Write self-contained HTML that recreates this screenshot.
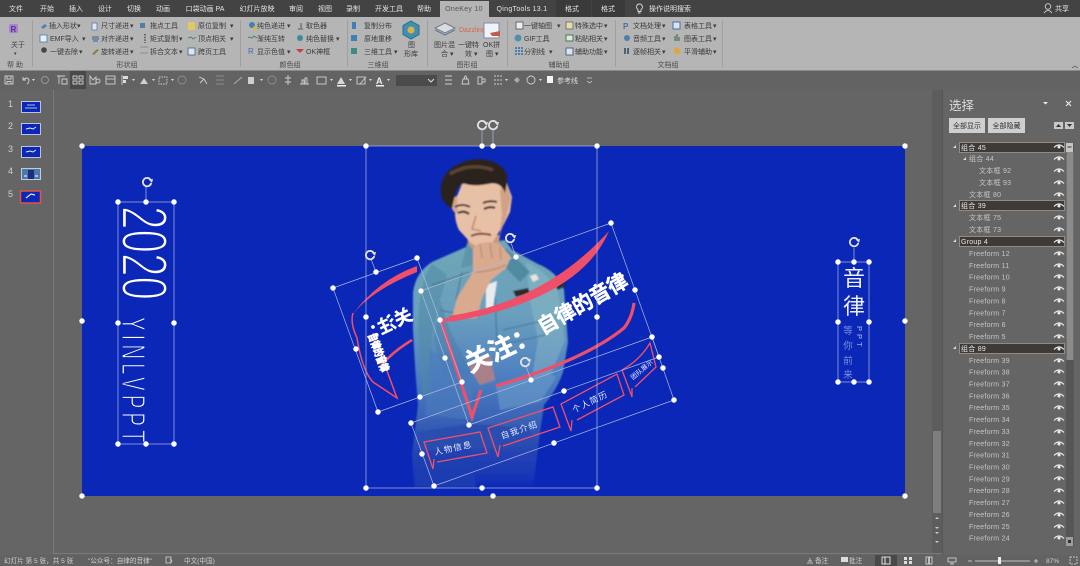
<!DOCTYPE html>
<html lang="zh"><head><meta charset="utf-8"><title>PowerPoint</title>
<style>
html,body{margin:0;padding:0;background:#656565;width:1080px;height:566px;overflow:hidden}
svg{display:block;font-family:"Liberation Sans","Noto Sans CJK SC",sans-serif}
.tab{font-size:7px;fill:#e4e4e4;text-anchor:middle}
.rb text{font-size:7px;fill:#3a3a3a}
.grp{font-size:7px;fill:#4a4a4a;text-anchor:middle}
.rows text{font-size:7px;fill:#c6c6c6;letter-spacing:.25px}
.st{font-size:6.6px;fill:#d0d0d0}
.sel{fill:none;stroke:#aeb8e2;stroke-width:.7}
.r{fill:none;stroke:#f0506a;stroke-linejoin:miter}
.tag{font-size:8.5px;fill:#e8ecff;letter-spacing:1.2px}
.tb{fill:none;stroke:#cfcfcf;stroke-width:.9}
</style></head><body>
<svg width="1080" height="566" viewBox="0 0 1080 566" xmlns="http://www.w3.org/2000/svg">
<defs>
<linearGradient id="den" x1="0" y1="0" x2="0" y2="1">
<stop offset="0" stop-color="#6fa6b6"/><stop offset=".3" stop-color="#6a9fbd"/><stop offset=".55" stop-color="#4d7fc0"/><stop offset=".72" stop-color="#3a63b6"/><stop offset=".85" stop-color="#2444b2"/><stop offset=".94" stop-color="#1a38b5"/><stop offset="1" stop-color="#0b27b7"/>
</linearGradient>
<g id="h"><circle r="2.600" fill="#fff" stroke="#cfd4e6" stroke-width=".5"/></g>
<g id="rot"><path d="M3.6,-2.2A4.2,4.2 0 1 0 4.2,1" fill="none" stroke="#e2e2e2" stroke-width="1.8"/><path d="M1.8,-2.4L6,-3L5,1Z" fill="#e2e2e2"/></g>
<g id="eye"><path d="M-5,1.5Q0,-3.5 5,1.5" fill="none" stroke="#eee" stroke-width="1.1"/><circle cy="1" r="1.5" fill="#eee"/></g>
<filter id="soft"><feGaussianBlur stdDeviation=".7"/></filter>
<filter id="soft2"><feGaussianBlur stdDeviation=".3"/></filter>
</defs>

<!-- frame -->
<rect width="1080" height="566" fill="#656565"/>
<rect width="1080" height="17" fill="#434343"/>
<rect x="556" y="0" width="35" height="17" fill="#3a3a3a"/>
<rect x="592" y="0" width="33" height="17" fill="#3a3a3a"/>
<rect y="17" width="1080" height="53" fill="#b5b5b5"/>
<rect x="440" y="1" width="49" height="17" fill="#b5b5b5"/>
<rect y="70" width="1080" height="1" fill="#8a8a8a"/>
<rect y="71" width="1080" height="19" fill="#636363"/>

<!-- tabs -->
<g filter="url(#soft2)">
<text class="tab" x="16" y="11">文件</text><text class="tab" x="47" y="11">开始</text><text class="tab" x="76" y="11">插入</text><text class="tab" x="105" y="11">设计</text><text class="tab" x="134" y="11">切换</text><text class="tab" x="163" y="11">动画</text><text class="tab" x="205" y="11">口袋动画 PA</text><text class="tab" x="257" y="11">幻灯片放映</text><text class="tab" x="296" y="11">审阅</text><text class="tab" x="325" y="11">视图</text><text class="tab" x="353" y="11">录制</text><text class="tab" x="389" y="11">开发工具</text><text class="tab" x="424" y="11">帮助</text>
<text class="tab" x="464" y="11" style="fill:#555;letter-spacing:.3px">OneKey 10</text>
<text class="tab" x="522" y="11" style="letter-spacing:.3px">QingTools 13.1</text>
<text class="tab" x="572" y="11">格式</text><text class="tab" x="608" y="11">格式</text>
<path d="M639,4a3,3 0 0 1 2,5.5v2h-3v-2a3,3 0 0 1 1,-5.5zM638,13h2.500" fill="none" stroke="#ddd" stroke-width=".9"/>
<text class="tab" x="670" y="11">操作说明搜索</text>
<circle cx="1048" cy="6.500" r="2.800" fill="none" stroke="#ddd" stroke-width=".8"/><path d="M1044,13q4,-5 8,0" fill="none" stroke="#ddd" stroke-width=".8"/>
<text class="tab" x="1062" y="11">共享</text>
</g>

<!-- ribbon -->
<g filter="url(#soft2)">
<g fill="#9a9a9a">
<rect x="32" y="20" width=".8" height="47"/><rect x="240" y="20" width=".8" height="47"/><rect x="347" y="20" width=".8" height="47"/><rect x="427" y="20" width=".8" height="47"/><rect x="507" y="20" width=".8" height="47"/><rect x="615" y="20" width=".8" height="47"/><rect x="722" y="20" width=".8" height="47"/>
</g>
<g class="rb">
<text x="11" y="47" style="fill:#444">关于</text><text x="14" y="55" style="font-size:5px">▾</text>
<text x="49" y="28">插入形状</text><text x="77" y="28">▾</text><text x="50" y="41">EMF导入</text><text x="82" y="41">▾</text><text x="50" y="54">一键去除</text><text x="79" y="54">▾</text>
<text x="101" y="28">尺寸递进</text><text x="130" y="28">▾</text><text x="101" y="41">对齐递进</text><text x="130" y="41">▾</text><text x="101" y="54">旋转递进</text><text x="130" y="54">▾</text>
<text x="150" y="28">拖点工具</text><text x="150" y="41">矩式复制</text><text x="179" y="41">▾</text><text x="150" y="54">拆合文本</text><text x="179" y="54">▾</text>
<text x="198" y="28">原位复制</text><text x="230" y="28">▾</text><text x="198" y="41">顶点相关</text><text x="230" y="41">▾</text><text x="198" y="54">跨页工具</text>
<text x="257" y="28">纯色递进</text><text x="287" y="28">▾</text><text x="257" y="41">渐纯互转</text><text x="257" y="54">显示色值</text><text x="287" y="54">▾</text>
<text x="306" y="28">取色器</text><text x="306" y="41">纯色替换</text><text x="336" y="41">▾</text><text x="306" y="54">OK神框</text>
<text x="364" y="28">复制分布</text><text x="364" y="41">原地重移</text><text x="364" y="54">三维工具</text><text x="394" y="54">▾</text>
<text x="408" y="47">图</text><text x="404" y="56">形库</text>
<text x="434" y="47">图片混</text><text x="441" y="56">合 ▾</text>
<text x="458" y="47">一键特</text><text x="465" y="56">效 ▾</text>
<text x="483" y="47">OK拼</text><text x="486" y="56">图 ▾</text>
<text x="524" y="28">一键轴图</text><text x="557" y="28">▾</text><text x="524" y="41">GIF工具</text><text x="524" y="54">分割线</text><text x="549" y="54">▾</text>
<text x="575" y="28">特殊选中</text><text x="604" y="28">▾</text><text x="575" y="41">粘贴相关</text><text x="604" y="41">▾</text><text x="575" y="54">辅助功能</text><text x="604" y="54">▾</text>
<text x="633" y="28">文档处理</text><text x="662" y="28">▾</text><text x="633" y="41">音频工具</text><text x="662" y="41">▾</text><text x="633" y="54">逐帧相关</text><text x="662" y="54">▾</text>
<text x="684" y="28">表格工具</text><text x="713" y="28">▾</text><text x="684" y="41">图表工具</text><text x="713" y="41">▾</text><text x="684" y="54">平滑辅助</text><text x="713" y="54">▾</text>
</g>
<text class="grp" x="15" y="67">帮 助</text><text class="grp" x="127" y="67">形状组</text><text class="grp" x="290" y="67">颜色组</text><text class="grp" x="378" y="67">三维组</text><text class="grp" x="467" y="67">图形组</text><text class="grp" x="559" y="67">辅助组</text><text class="grp" x="668" y="67">文档组</text>
<!-- ribbon icons -->
<rect x="9" y="24" width="9" height="9" rx="2" fill="#a784c8"/><text x="10.500" y="32" style="font-size:8px;fill:#5a2da0;font-weight:bold">R</text>
<path d="M41,27l4,-3 2,2 -4,3z" fill="#4d7fb0"/><rect x="40" y="35" width="7" height="7" fill="#e8f0f4" stroke="#3f7fb5" stroke-width=".8"/><circle cx="44" cy="50" r="2.800" fill="#444"/>
<rect x="92" y="23" width="5" height="7" fill="#dfe6ee" stroke="#4a6fa5" stroke-width=".7"/><path d="M92,37h7M92,39h7M93,41h5" stroke="#3f5f90" stroke-width=".9"/><path d="M92,54l5,-5 2,1 -5,5z" fill="#8f7b4a"/>
<rect x="140" y="23" width="5" height="5" fill="#4f7ea6"/><path d="M145,34v9" stroke="#333" stroke-width="1.200" stroke-dasharray="1.500 1.200"/><path d="M140,47h8M140,53h8" stroke="#6d8a6a" stroke-width=".8"/>
<rect x="188" y="22" width="7" height="8" fill="#e3c85f"/><path d="M188,38l3,-1 2,2 3,-2" stroke="#3f8b8b" stroke-width="1" fill="none"/><rect x="188" y="48" width="7" height="7" fill="#dde6ef" stroke="#3f5f90" stroke-width=".8"/>
<circle cx="252" cy="25" r="3" fill="#3f7fb5"/><circle cx="255" cy="28" r="2" fill="#d8b24a"/><path d="M248,37l4,1 2,-2 3,2" stroke="#48806f" stroke-width="1" fill="none"/><text x="248" y="54" style="font-size:8px;fill:#3f6fa8">R</text>
<path d="M298,29h5M301,23v5" stroke="#555" stroke-width="1"/><circle cx="300" cy="38" r="3" fill="#3d8aa0"/><path d="M296,49l4,4 4,-4z" fill="#c43f3f"/>
<rect x="352" y="22" width="4" height="7" fill="#3f7fb5"/><path d="M351,35h6v6h-6z" fill="#3f7fb5"/><rect x="351" y="48" width="6" height="6" fill="#3d8a8a"/>
<path d="M411,21l8,4.500v9l-8,4.500 -8,-4.500v-9z" fill="#3f8fae" stroke="#2c6d8a"/><circle cx="411" cy="30" r="3.500" fill="#d8b24a"/>
<path d="M445,23l10,5 -10,5 -10,-5z" fill="#d9dde2" stroke="#6f7d8a"/><path d="M435,30l10,5 10,-5" fill="none" stroke="#5f7590"/>
<text x="459" y="32" style="font-size:7px;fill:#d2674d">Dazzling</text>
<rect x="484" y="23" width="15" height="15" fill="#eef3f8" stroke="#88a"/><path d="M490,33l10,-2v5h-8z" fill="#c45a4e"/>
<rect x="516" y="22" width="7" height="7" fill="#eee" stroke="#667"/><circle cx="518" cy="38" r="3.500" fill="#4f8fb0"/><path d="M515,48h8M515,51h8M515,54h8" stroke="#2d6ca8" stroke-width="1.500" stroke-dasharray="2 1"/>
<rect x="566" y="22" width="7" height="7" fill="#e8dcae" stroke="#776"/><rect x="566" y="35" width="7" height="6" fill="#dfe8dc" stroke="#3f7a50"/><rect x="566" y="48" width="7" height="7" fill="#dbe4ee" stroke="#567"/>
<text x="623" y="29" style="font-size:8px;fill:#3f6fa8;font-weight:bold">P</text><circle cx="627" cy="38" r="3" fill="#4f7ea6"/><path d="M625,48v6M628,48v6" stroke="#345" stroke-width="1.500"/>
<rect x="673" y="22" width="7" height="7" fill="#dbe4ee" stroke="#4a6fa5"/><path d="M675,41v-5M677,41v-7M679,41v-4" stroke="#4a6f55" stroke-width="1.200"/><circle cx="677" cy="51" r="3.500" fill="#d8a94a"/>
<path d="M1072,68l3,-2 3,2" fill="none" stroke="#666" stroke-width=".9"/>
</g>

<!-- quick toolbar -->
<g filter="url(#soft2)">
<rect x="70" y="71" width="16" height="18" fill="#484848"/>
<rect x="5" y="76" width="8" height="8" class="tb"/><path d="M7,76v3h4v-3M7,84v-2.500h4v2.500" class="tb" stroke-width=".7"/>
<path d="M23,77v3h3M23,80q4,-4 6,0q0,3 -2,4" class="tb" stroke-width="1.300"/><path d="M32,79h3l-1.500,2z" fill="#ddd"/>
<circle cx="45" cy="80" r="3.500" class="tb" opacity=".5"/>
<path d="M57,76h8M59,76v8M62,79h5v5h-5z" class="tb"/>
<path d="M73,76h4v3h-4zM79,76h4v3h-4zM73,81h4v3h-4zM79,81h4v3h-4z" class="tb" stroke-width=".8"/>
<path d="M90,76l3,4 3,-3v7h-6z" class="tb"/><circle cx="98" cy="81" r="2" class="tb"/>
<rect x="106" y="76" width="9" height="8" class="tb"/><path d="M106,79h9" class="tb"/>
<path d="M122,75v10" class="tb"/><rect x="123" y="76" width="5" height="3" fill="#ddd"/><rect x="123" y="80" width="3" height="3" fill="#ddd"/><path d="M132,79h3l-1.500,2z" fill="#ddd"/>
<path d="M140,84l4,-6 4,6z" fill="#cfcfcf"/><path d="M152,79h3l-1.500,2z" fill="#ddd"/>
<rect x="159" y="77" width="8" height="7" class="tb" stroke-dasharray="1.500 1"/><path d="M171,79h3l-1.500,2z" fill="#ddd"/>
<circle cx="182" cy="80" r="4" class="tb" opacity=".4"/>
<path d="M199,77l5,2 3,5M200,83l4,-4" class="tb"/>
<path d="M216,76h8M216,80h8M216,84h8" class="tb" opacity=".4"/>
<path d="M234,84l8,-7" class="tb" opacity=".7"/>
<rect x="248" y="77" width="6" height="7" fill="#cfcfcf"/><path d="M260,79h3l-1.500,2z" fill="#ddd"/>
<circle cx="272" cy="80" r="4" class="tb" opacity=".4"/>
<path d="M288,75v10M285,78h6M285,82h6" class="tb"/><path d="M300,84h9M302,84v-4h2v4M305,84v-6h2v6" class="tb" stroke-width=".8"/>
<rect x="317" y="77" width="9" height="7" class="tb"/><path d="M330,79h3l-1.500,2z" fill="#ddd"/>
<path d="M337,84l4,-7 4,7z" fill="#d6d6d6"/><rect x="337" y="85" width="9" height="1.500" fill="#eee"/><path d="M349,79h3l-1.500,2z" fill="#ddd"/>
<rect x="357" y="77" width="8" height="7" class="tb"/><path d="M360,84l6,-7" class="tb"/><path d="M369,79h3l-1.500,2z" fill="#ddd"/>
<text x="376" y="84" style="font-size:9px;fill:#eee;font-weight:bold">A</text><rect x="376" y="85" width="8" height="1.500" fill="#eee"/><path d="M387,79h3l-1.500,2z" fill="#ddd"/>
<rect x="396" y="75" width="41" height="11" fill="#4b4b4b"/><path d="M428,79l3,3 3,-3" fill="none" stroke="#ddd" stroke-width="1"/>
<path d="M445,76h7M445,80h7M445,84h7" class="tb"/>
<path d="M462,84h7l-1,-5h-5zM464,79l1,-3h1l1,3" class="tb" stroke-width=".8"/>
<path d="M478,77h4v7h-4zM482,79h3v3h-3z" class="tb" stroke-width=".8"/>
<path d="M494,76h8M494,80h8M494,84h8" class="tb" stroke-dasharray="2 1"/><path d="M505,79h3l-1.500,2z" fill="#ddd"/>
<path d="M514,80l3,-3 3,3 -3,3z" fill="#aaa"/>
<circle cx="531" cy="80" r="4" class="tb"/><path d="M539,79h3l-1.500,2z" fill="#ddd"/>
<rect x="547" y="76" width="6" height="7" fill="#f4f4f4"/>
<text x="557" y="83" style="font-size:7px;fill:#ddd">参考线</text>
<path d="M587,78h5M587,81l2.500,2 2.500,-2" fill="none" stroke="#ccc" stroke-width=".8"/>
</g>

<!-- panes -->
<rect x="53" y="90" width="1" height="463" fill="#7a7a7a"/>
<rect x="53" y="553" width="889" height="1" fill="#7a7a7a"/>
<rect x="942" y="90" width="1" height="465" fill="#565656"/>
<rect x="932" y="90" width="10" height="463" fill="#5d5d5d"/>
<rect x="933" y="431" width="8" height="82" fill="#7e7e7e"/>
<path d="M935,519l2,-2 2,2zM935,527h4l-2,2zM935,532h4l-2,2zM935,541h4l-2,2z" fill="#ccc"/>
<rect y="555" width="1080" height="11" fill="#626262"/>

<!-- thumbnails -->
<g font-size="9" fill="#d0d0d0">
<text x="8" y="107">1</text><text x="8" y="129">2</text><text x="8" y="152">3</text><text x="8" y="174">4</text><text x="8" y="197">5</text>
</g>
<g stroke="#dfe3ee" stroke-width=".8" fill="#0b27b7">
<rect x="21.500" y="101.500" width="19" height="11"/><rect x="21.500" y="123.500" width="19" height="11"/><rect x="21.500" y="146.500" width="19" height="11"/>
<rect x="21.500" y="168.500" width="19" height="11" fill="#4d77b0"/>
</g>
<rect x="20.500" y="191" width="20" height="12" fill="#0b27b7" stroke="#e4553f" stroke-width="1.500"/>
<path d="M27,105h8M25,108h12" stroke="#dfe3ee" stroke-width=".8"/>
<path d="M26,129l4,-1 3,1 3,-2" stroke="#eee" fill="none"/><path d="M26,152l4,-1 3,1 3,-2" stroke="#eee" fill="none"/>
<path d="M28,170h6v9h-6z" fill="#1a2f77"/><path d="M24,176h3M35,176h3" stroke="#fff"/>
<path d="M26,198l5,-4 4,1" stroke="#dfe3ee" stroke-width="1.200" fill="none"/>

<!-- slide -->
<rect x="82" y="146" width="823" height="350" fill="#0b27b7"/>

<!-- person -->
<g filter="url(#soft)">
<!-- torso / jeans -->
<path d="M466,247L432,262Q416,272 413,292L413,330Q415,370 418,405L412,455L414,488L533,488L539,440L544,405Q558,388 563,372L568,342L564,290Q558,272 538,264L512,250L505,240Z" fill="url(#den)"/>
<!-- sleeve shading -->
<path d="M432,264Q420,280 418,320L422,395L432,398L432,335L440,300L447,275Z" fill="#4f8aa4" opacity=".55"/>
<path d="M526,262Q548,272 558,292L565,340L552,372L532,378L538,340L530,300Z" fill="#8dbcc6" opacity=".45"/>
<path d="M440,300L434,340L445,380L462,395L470,370L450,330Z" fill="#3f76a0" opacity=".35"/>
<path d="M496,385L545,368L556,378L540,402L500,410Z" fill="#6a9cc8" opacity=".6"/>
<path d="M430,350L470,368L474,420L425,415Z" fill="#4a7cbc" opacity=".55"/>
<!-- belt and jeans -->
<path d="M417,432L470,424L530,428L534,445L420,452Z" fill="#2a4caf" opacity=".9"/>
<path d="M418,452L470,446L476,488L414,488Z" fill="#1f40b0" opacity=".7"/>
<!-- pockets, seams -->
<path d="M440,310L478,318M503,330L555,318M500,345L545,335M432,285L470,272" stroke="#3f7388" stroke-width="1.200" fill="none" opacity=".7"/>
<path d="M495,296L497,345M462,272L456,300" stroke="#3f6f8a" stroke-width="1.500" fill="none" opacity=".6"/>
<!-- shirt -->
<path d="M486,285L497,281L493,308L486,312Z" fill="#e8ecee"/>
<!-- neck & face -->
<path d="M467,235L470,262L497,258L500,235Z" fill="#c99a80"/>
<path d="M457,196Q452,216 459,230L471,243Q481,250 492,243L504,224L510,212L512,197L505,178L462,184Z" fill="#e8c0a6"/>
<path d="M499,238L507,214L511,198L506,180L500,190L502,215Z" fill="#c79578" opacity=".7"/>
<path d="M452,198Q449,205 454,212L458,214L457,196Z" fill="#d2a78c"/>
<path d="M476,216L472,229L481,231" fill="none" stroke="#b9846a" stroke-width="1.400"/>
<!-- hair -->
<path d="M441,195Q439,175 455,166Q476,154 496,163Q509,170 507,182L505,193Q501,181 488,184Q472,187 463,183L456,190L452,208Q444,205 441,195Z" fill="#2b211d"/>
<path d="M450,174Q470,162 493,170" stroke="#5a4333" stroke-width="3.500" fill="none"/>
<!-- features -->
<path d="M455,207Q462,203 470,207M483,203Q490,200 497,202" stroke="#2a1f1b" stroke-width="1.800" fill="none"/>
<path d="M458,213Q464,210 469,214M484,209Q490,206 495,208" stroke="#352b2b" stroke-width="2.200" fill="none"/>
<path d="M471,236Q480,232 491,235" stroke="#6f4238" stroke-width="2" fill="none"/>
<!-- collar -->
<path d="M467,243L461,268L473,265L478,254Z" fill="#5f95a8"/>
<path d="M506,248L530,272L520,282L500,262Z" fill="#4f8aa0"/>
<!-- hand/arm -->
<path d="M473,248Q481,239 500,244L511,257L506,268L491,280L482,298L477,318L452,318L457,298L473,272Z" fill="#d9aa8e"/>
<path d="M474,272Q491,272 506,265M480,244L482,258M490,243L492,258M500,246L501,260" stroke="#b5856d" stroke-width="1" fill="none"/>
<!-- lower hand -->
<path d="M469,367L490,355L495,380L480,385Z" fill="#a98088"/>
<!-- patches -->
<path d="M530,276l6,-2 3,5 -6,3z" fill="#e4e4e4"/><path d="M513,291l15,-3 2,5 -14,4z" fill="#2f2b26"/><path d="M555,285l8,-4 3,5 -8,4z" fill="#24303a"/>
</g>

<!-- big ribbon -->
<g filter="url(#soft2)">
<path d="M449,316Q545,302 609,231Q580,300 450,322Z" fill="#f0506a"/>
<path class="r" stroke-width="3.200" d="M451,319L441,321L472,417L481,390"/>
<path class="r" stroke-width="3.200" d="M496,386Q585,360 624,328Q632,318 634,303"/>
<text transform="translate(470,373) rotate(-25)" font-size="26" font-weight="700" fill="#fff" stroke="#fff" stroke-width=".5">关注：</text>
<text transform="translate(543,335) rotate(-30)" font-size="21" font-weight="700" fill="#fff" stroke="#fff" stroke-width=".5" textLength="100" lengthAdjust="spacingAndGlyphs">自律的音律</text>

<!-- left flipped ribbon -->
<path d="M353,313Q350,323 357,338Q362,370 373,382L397,398L373,333" fill="none" stroke="#f0506a" stroke-width="1.500"/>
<path d="M417,266Q378,280 352,315Q372,290 417,272Z" fill="#f0506a"/>
<path d="M412,340Q392,352 380,367" fill="none" stroke="#f0506a" stroke-width="2.500"/>
<text transform="translate(414,319) rotate(-25) scale(-1,1)" font-size="18" font-weight="700" fill="#fff" stroke="#fff" stroke-width=".3">关注：</text>
<text transform="translate(368,335) rotate(70)" font-size="11" font-weight="700" fill="#fff" textLength="40" lengthAdjust="spacingAndGlyphs" stroke="#fff" stroke-width=".8">自律的音律</text>

<!-- small tags -->
<g class="r" stroke-width="1.300">
<path d="M437,462L487,453L480,432L424,442L433,469L434,459"/>
<path d="M503,446L560,427L553,407L488,428L498,457L500,445"/>
<path d="M577,420L624,395L617,374L561,404L571,431L572,420"/>
<path d="M635,387L656,367L650,343Q640,360 622,370L632,397L632,388"/>
</g>
<text class="tag" transform="translate(435,455) rotate(-12)">人物信息</text>
<text class="tag" transform="translate(502,439) rotate(-19)">自我介绍</text>
<text class="tag" transform="translate(574,413) rotate(-26)">个人简历</text>
<text class="tag" transform="translate(633,380) rotate(-40)" style="font-size:6.500px;letter-spacing:.2px">团队展示</text>

<!-- left vertical text -->
<text transform="translate(122,206) rotate(90) scale(.65,1)" font-size="65" fill="#fff" stroke="#0b27b7" stroke-width="2.200">2020</text>
<text transform="translate(122,317) rotate(90) scale(.62,1)" font-size="33" fill="#fff" stroke="#0b27b7" stroke-width="1.300" letter-spacing="6.500">YINLVPPT</text>

<!-- right vertical text -->
<text x="854" y="286" text-anchor="middle" font-size="22" fill="#eef0ff">音</text>
<text x="854" y="314" text-anchor="middle" font-size="22" fill="#eef0ff">律</text>
<g font-size="9.500" fill="#7f90e0" text-anchor="middle"><text x="848" y="334">等</text><text x="848" y="349">你</text><text x="848" y="364">前</text><text x="848" y="378">来</text></g>
<text transform="translate(857,326) rotate(90)" font-size="7.500" fill="#b5c0f0" letter-spacing="3">PPT</text>
</g>

<!-- selection boxes -->
<g class="sel">
<rect x="366" y="146" width="231" height="342"/>
<path d="M421,291L611,223L659,357L469,425Z"/>
<path d="M333,288L417,258L462,382L378,412Z"/>
<path d="M652,337L674,400L434,486L411,423Z"/>
<rect x="118" y="202" width="56" height="242"/>
<rect x="838" y="262" width="31" height="120"/>
<path d="M146,202V186M854,262V248M376,272L371,259M531,380L526,366M516,257L511,243M482,146V130M493,146V130"/>
</g>
<g>
<use href="#h" x="82" y="146"/><use href="#h" x="493" y="146"/><use href="#h" x="905" y="146"/><use href="#h" x="82" y="321"/><use href="#h" x="905" y="321"/><use href="#h" x="82" y="496"/><use href="#h" x="493" y="496"/><use href="#h" x="905" y="496"/>
<use href="#h" x="366" y="146"/><use href="#h" x="482" y="146"/><use href="#h" x="597" y="146"/><use href="#h" x="366" y="317"/><use href="#h" x="597" y="317"/><use href="#h" x="366" y="488"/><use href="#h" x="482" y="488"/><use href="#h" x="597" y="488"/>
<use href="#h" x="421" y="291"/><use href="#h" x="516" y="257"/><use href="#h" x="611" y="223"/><use href="#h" x="635" y="290"/><use href="#h" x="659" y="357"/><use href="#h" x="564" y="391"/><use href="#h" x="469" y="425"/><use href="#h" x="445" y="358"/>
<use href="#h" x="333" y="288"/><use href="#h" x="376" y="272"/><use href="#h" x="417" y="258"/><use href="#h" x="440" y="320"/><use href="#h" x="462" y="382"/><use href="#h" x="420" y="397"/><use href="#h" x="378" y="412"/><use href="#h" x="356" y="349"/>
<use href="#h" x="652" y="337"/><use href="#h" x="663" y="368"/><use href="#h" x="674" y="400"/><use href="#h" x="554" y="443"/><use href="#h" x="434" y="486"/><use href="#h" x="422" y="454"/><use href="#h" x="411" y="423"/><use href="#h" x="531" y="380"/>
<use href="#h" x="118" y="202"/><use href="#h" x="146" y="202"/><use href="#h" x="174" y="202"/><use href="#h" x="118" y="323"/><use href="#h" x="174" y="323"/><use href="#h" x="118" y="444"/><use href="#h" x="146" y="444"/><use href="#h" x="174" y="444"/>
<use href="#h" x="838" y="262"/><use href="#h" x="854" y="262"/><use href="#h" x="869" y="262"/><use href="#h" x="838" y="322"/><use href="#h" x="869" y="322"/><use href="#h" x="838" y="382"/><use href="#h" x="854" y="382"/><use href="#h" x="869" y="382"/>
<use href="#rot" x="147" y="182"/><use href="#rot" x="854" y="242"/><use href="#rot" x="482" y="125"/><use href="#rot" x="493" y="125"/><use href="#rot" x="370" y="255"/><use href="#rot" x="510" y="238"/><use href="#rot" x="525" y="362"/>
</g>

<!-- right panel -->
<text x="949" y="110" font-size="12.500" fill="#dcdcdc">选择</text>
<path d="M1043,102h5l-2.500,2.500z" fill="#eee"/>
<path d="M1066,101l5,5M1071,101l-5,5" stroke="#eee" stroke-width="1.100"/>
<rect x="949" y="118" width="36" height="15" fill="#cfcfcf"/><rect x="988" y="118" width="37" height="15" fill="#cfcfcf"/>
<text x="967" y="128" font-size="7" fill="#333" text-anchor="middle">全部显示</text><text x="1006.500" y="128" font-size="7" fill="#333" text-anchor="middle">全部隐藏</text>
<rect x="1054" y="122" width="9" height="7" fill="#c8c8c8"/><rect x="1065" y="122" width="9" height="7" fill="#c8c8c8"/>
<path d="M1056,127l2.500,-3 2.500,3z" fill="#333"/><path d="M1067,124l2.500,3 2.500,-3z" fill="#333"/>

<rect x="1066" y="143" width="8" height="403" fill="#565656"/>
<rect x="1066.500" y="152" width="7" height="208" fill="#8b8b8b"/>
<rect x="1066" y="143" width="7" height="9" fill="#c6c6c6"/><path d="M1067.500,147h4" stroke="#333"/>
<rect x="1066" y="537" width="7" height="9" fill="#9c9c9c"/><rect x="1068" y="540" width="3" height="3" fill="#333"/>

<g fill="#3e3a38" stroke="#a89a8c" stroke-width=".8">
<rect x="959.500" y="142.500" width="105" height="10"/><rect x="959.500" y="200.500" width="105" height="10"/><rect x="959.500" y="236.500" width="105" height="10"/><rect x="959.500" y="343.500" width="105" height="10"/>
</g>
<path d="M953,148l3,-3v3zM963,160l3,-3v3zM953,207l3,-3v3zM953,242l3,-3v3zM953,349l3,-3v3z" fill="#ddd"/>
<g class="rows">
<text x="961" y="150" style="fill:#e8e8e8">组合 45</text>
<text x="969" y="161">组合 44</text>
<text x="979" y="173">文本框 92</text>
<text x="979" y="185">文本框 93</text>
<text x="969" y="197">文本框 80</text>
<text x="961" y="208" style="fill:#e8e8e8">组合 39</text>
<text x="969" y="220">文本框 75</text>
<text x="969" y="232">文本框 73</text>
<text x="961" y="244" style="fill:#e8e8e8">Group 4</text>
<text x="969" y="256">Freeform 12</text>
<text x="969" y="268">Freeform 11</text>
<text x="969" y="279.500">Freeform 10</text>
<text x="969" y="291.500">Freeform 9</text>
<text x="969" y="303.500">Freeform 8</text>
<text x="969" y="315.500">Freeform 7</text>
<text x="969" y="327">Freeform 6</text>
<text x="969" y="339">Freeform 5</text>
<text x="961" y="351" style="fill:#e8e8e8">组合 89</text>
<text x="969" y="363">Freeform 39</text>
<text x="969" y="374.500">Freeform 38</text>
<text x="969" y="386.500">Freeform 37</text>
<text x="969" y="398.500">Freeform 36</text>
<text x="969" y="410">Freeform 35</text>
<text x="969" y="422">Freeform 34</text>
<text x="969" y="434">Freeform 33</text>
<text x="969" y="446">Freeform 32</text>
<text x="969" y="457.500">Freeform 31</text>
<text x="969" y="469.500">Freeform 30</text>
<text x="969" y="481.500">Freeform 29</text>
<text x="969" y="493">Freeform 28</text>
<text x="969" y="505">Freeform 27</text>
<text x="969" y="517">Freeform 26</text>
<text x="969" y="529">Freeform 25</text>
<text x="969" y="540.500">Freeform 24</text>
</g>
<g>
<use href="#eye" x="1059" y="146"/><use href="#eye" x="1059" y="158"/><use href="#eye" x="1059" y="170"/><use href="#eye" x="1059" y="182"/><use href="#eye" x="1059" y="194"/><use href="#eye" x="1059" y="205"/><use href="#eye" x="1059" y="217"/><use href="#eye" x="1059" y="229"/><use href="#eye" x="1059" y="241"/><use href="#eye" x="1059" y="253"/><use href="#eye" x="1059" y="265"/><use href="#eye" x="1059" y="276"/><use href="#eye" x="1059" y="288"/><use href="#eye" x="1059" y="300"/><use href="#eye" x="1059" y="312"/><use href="#eye" x="1059" y="324"/><use href="#eye" x="1059" y="336"/><use href="#eye" x="1059" y="348"/><use href="#eye" x="1059" y="360"/><use href="#eye" x="1059" y="371"/><use href="#eye" x="1059" y="383"/><use href="#eye" x="1059" y="395"/><use href="#eye" x="1059" y="407"/><use href="#eye" x="1059" y="419"/><use href="#eye" x="1059" y="431"/><use href="#eye" x="1059" y="443"/><use href="#eye" x="1059" y="454"/><use href="#eye" x="1059" y="466"/><use href="#eye" x="1059" y="478"/><use href="#eye" x="1059" y="490"/><use href="#eye" x="1059" y="502"/><use href="#eye" x="1059" y="514"/><use href="#eye" x="1059" y="526"/><use href="#eye" x="1059" y="537"/>
</g>

<!-- status bar -->
<g filter="url(#soft2)">
<text class="st" x="4" y="563">幻灯片 第 5 张，共 5 张</text>
<text class="st" x="88" y="563">"公众号：自律的音律"</text>
<rect x="166" y="557" width="5" height="6" fill="none" stroke="#ddd" stroke-width=".7"/><path d="M170,559l2,2 -2,2" fill="none" stroke="#ddd" stroke-width=".7"/>
<text class="st" x="184" y="563">中文(中国)</text>
<path d="M807,563h6M808,561h4M810,558v3" stroke="#ddd" stroke-width=".7"/>
<text class="st" x="815" y="563">备注</text>
<rect x="841" y="557" width="7" height="5" fill="#ddd"/><text class="st" x="849" y="563">批注</text>
<rect x="875" y="555" width="22" height="11" fill="#4a4a4a"/>
<rect x="882" y="557" width="8" height="7" fill="none" stroke="#eee" stroke-width=".9"/><path d="M885,557v7" stroke="#eee"/>
<path d="M904,557h3v3h-3zM909,557h3v3h-3zM904,561h3v3h-3zM909,561h3v3h-3z" fill="#ddd"/>
<rect x="926" y="557" width="6" height="7" fill="none" stroke="#ddd" stroke-width=".8"/><path d="M929,557v7" stroke="#ddd" stroke-width="1.500"/>
<path d="M948,558h8v4h-8zM952,562v2M950,564h4" fill="none" stroke="#ddd" stroke-width=".8"/>
<path d="M968,561h4M975,561h55M1034,561h4M1036,559v4" stroke="#ddd" stroke-width=".8"/>
<rect x="998" y="557" width="3" height="7" fill="#eee"/>
<text class="st" x="1046" y="563">87%</text>
<rect x="1070" y="557" width="7" height="7" fill="none" stroke="#ddd" stroke-width=".8" stroke-dasharray="2 1"/>
</g>
</svg>
</body></html>
